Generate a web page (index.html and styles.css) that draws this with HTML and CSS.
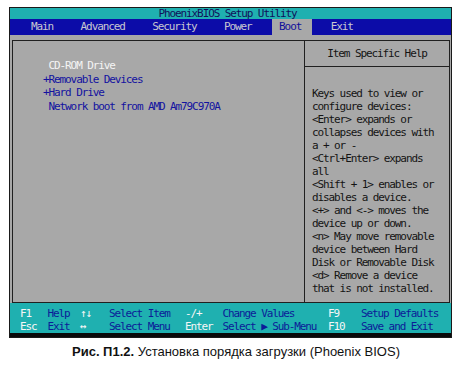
FILE: index.html
```html
<!DOCTYPE html>
<html>
<head>
<meta charset="utf-8">
<link rel="stylesheet" href="styles.css">
</head>
<body>
<div class="screen">
  <div class="title">PhoenixBIOS Setup Utility</div>
  <div class="menu">
    <span class="mi">Main</span>
    <span class="mi">Advanced</span>
    <span class="mi">Security</span>
    <span class="mi">Power</span>
    <span class="mi active">Boot</span>
    <span class="mi">Exit</span>
  </div>
  <div class="body">
    <div class="frame">
      <div class="main">
        <div class="item sel"> CD-ROM Drive</div>
        <div class="item">+Removable Devices</div>
        <div class="item">+Hard Drive</div>
        <div class="item"> Network boot from AMD Am79C970A</div>
      </div>
      <div class="help">
        <div class="help-head">Item Specific Help</div>
        <div class="help-text">Keys used to view or
configure devices:
&lt;Enter&gt; expands or
collapses devices with
a + or -
&lt;Ctrl+Enter&gt; expands
all
&lt;Shift + 1&gt; enables or
disables a device.
&lt;+&gt; and &lt;-&gt; moves the
device up or down.
&lt;n&gt; May move removable
device between Hard
Disk or Removable Disk
&lt;d&gt; Remove a device
that is not installed.</div>
      </div>
    </div>
  </div>
  <div class="footer">
    <span class="k">F1</span><span class="d">Help</span><span class="k">↑↓</span><span class="d">Select Item</span><span class="k">-/+</span><span class="d">Change Values</span><span class="k">F9</span><span class="d">Setup Defaults</span>
    <span class="k">Esc</span><span class="d">Exit</span><span class="k">↔</span><span class="d">Select Menu</span><span class="k">Enter</span><span class="d">Select ▶ Sub-Menu</span><span class="k">F10</span><span class="d">Save and Exit</span>
  </div>
  <div class="bottom"></div>
</div>
<p class="caption"><b>Рис. П1.2.</b> Установка порядка загрузки (Phoenix BIOS)</p>
</body>
</html>
```

FILE: styles.css
```css
html, body {
  margin: 0;
  padding: 0;
  background: #ffffff;
}
body {
  width: 458px;
  height: 375px;
  overflow: hidden;
  padding-top: 7px;
  box-sizing: border-box;
}
.screen {
  box-sizing: border-box;
  margin-left: 9px;
  width: 443px;
  height: 331px;
  border: 1px solid #1a1a1a;
  background: #a8a8a8;
  display: flex;
  flex-direction: column;
  font-family: "DejaVu Sans Mono", monospace;
  font-size: 11px;
  letter-spacing: -1.1px;
}
.title {
  height: 11px;
  line-height: 11px;
  background: #1fb0b0;
  color: #10105a;
  text-align: center;
  padding-right: 6px;
  white-space: pre;
}
.menu {
  height: 16px;
  line-height: 16px;
  background: #0c0ca8;
  color: #c8c8d0;
  display: flex;
  gap: 13.5px;
  padding-left: 14px;
}
.mi {
  padding: 0 7px;
  white-space: pre;
}
.mi.active {
  background: #a8a8a8;
  color: #10109a;
  padding-right: 11px;
  margin-right: -2px;
}
.body {
  flex: 1;
  padding: 5px 1px 0 2px;
  display: flex;
}
.frame {
  flex: 1;
  border: 1px solid #202020;
  display: grid;
  grid-template-columns: 292px 1fr;
}
.main {
  border-right: 1px solid #202020;
  padding: 18px 0 0 30px;
  line-height: 13.6px;
  color: #1212a0;
}
.item {
  white-space: pre;
}
.item.sel {
  color: #f4f4f4;
}
.help {
  display: flex;
  flex-direction: column;
}
.help-head {
  height: 25px;
  line-height: 25px;
  border-bottom: 1px solid #202020;
  text-align: center;
  color: #141414;
  white-space: pre;
}
.help-text {
  padding: 20px 0 0 7px;
  line-height: 13px;
  color: #141414;
  white-space: pre;
}
.footer {
  height: 30px;
  box-sizing: border-box;
  padding: 4px 0 0 10px;
  background: #1fb0b0;
  display: grid;
  grid-template-columns: 27.5px 32.5px 29px 76px 37.5px 105.5px 33px 1fr;
  grid-auto-rows: 13px;
  line-height: 13px;
}
.k, .d {
  white-space: pre;
}
.k {
  color: #f6f6f6;
}
.d {
  color: #0c1c98;
}
.bottom {
  height: 4px;
  background: #0a0a0a;
}
.caption {
  margin: 6px 0 0 0;
  text-align: center;
  font-family: "Liberation Sans", Arial, sans-serif;
  font-size: 13px;
  color: #111111;
  padding-left: 14px;
}
```
